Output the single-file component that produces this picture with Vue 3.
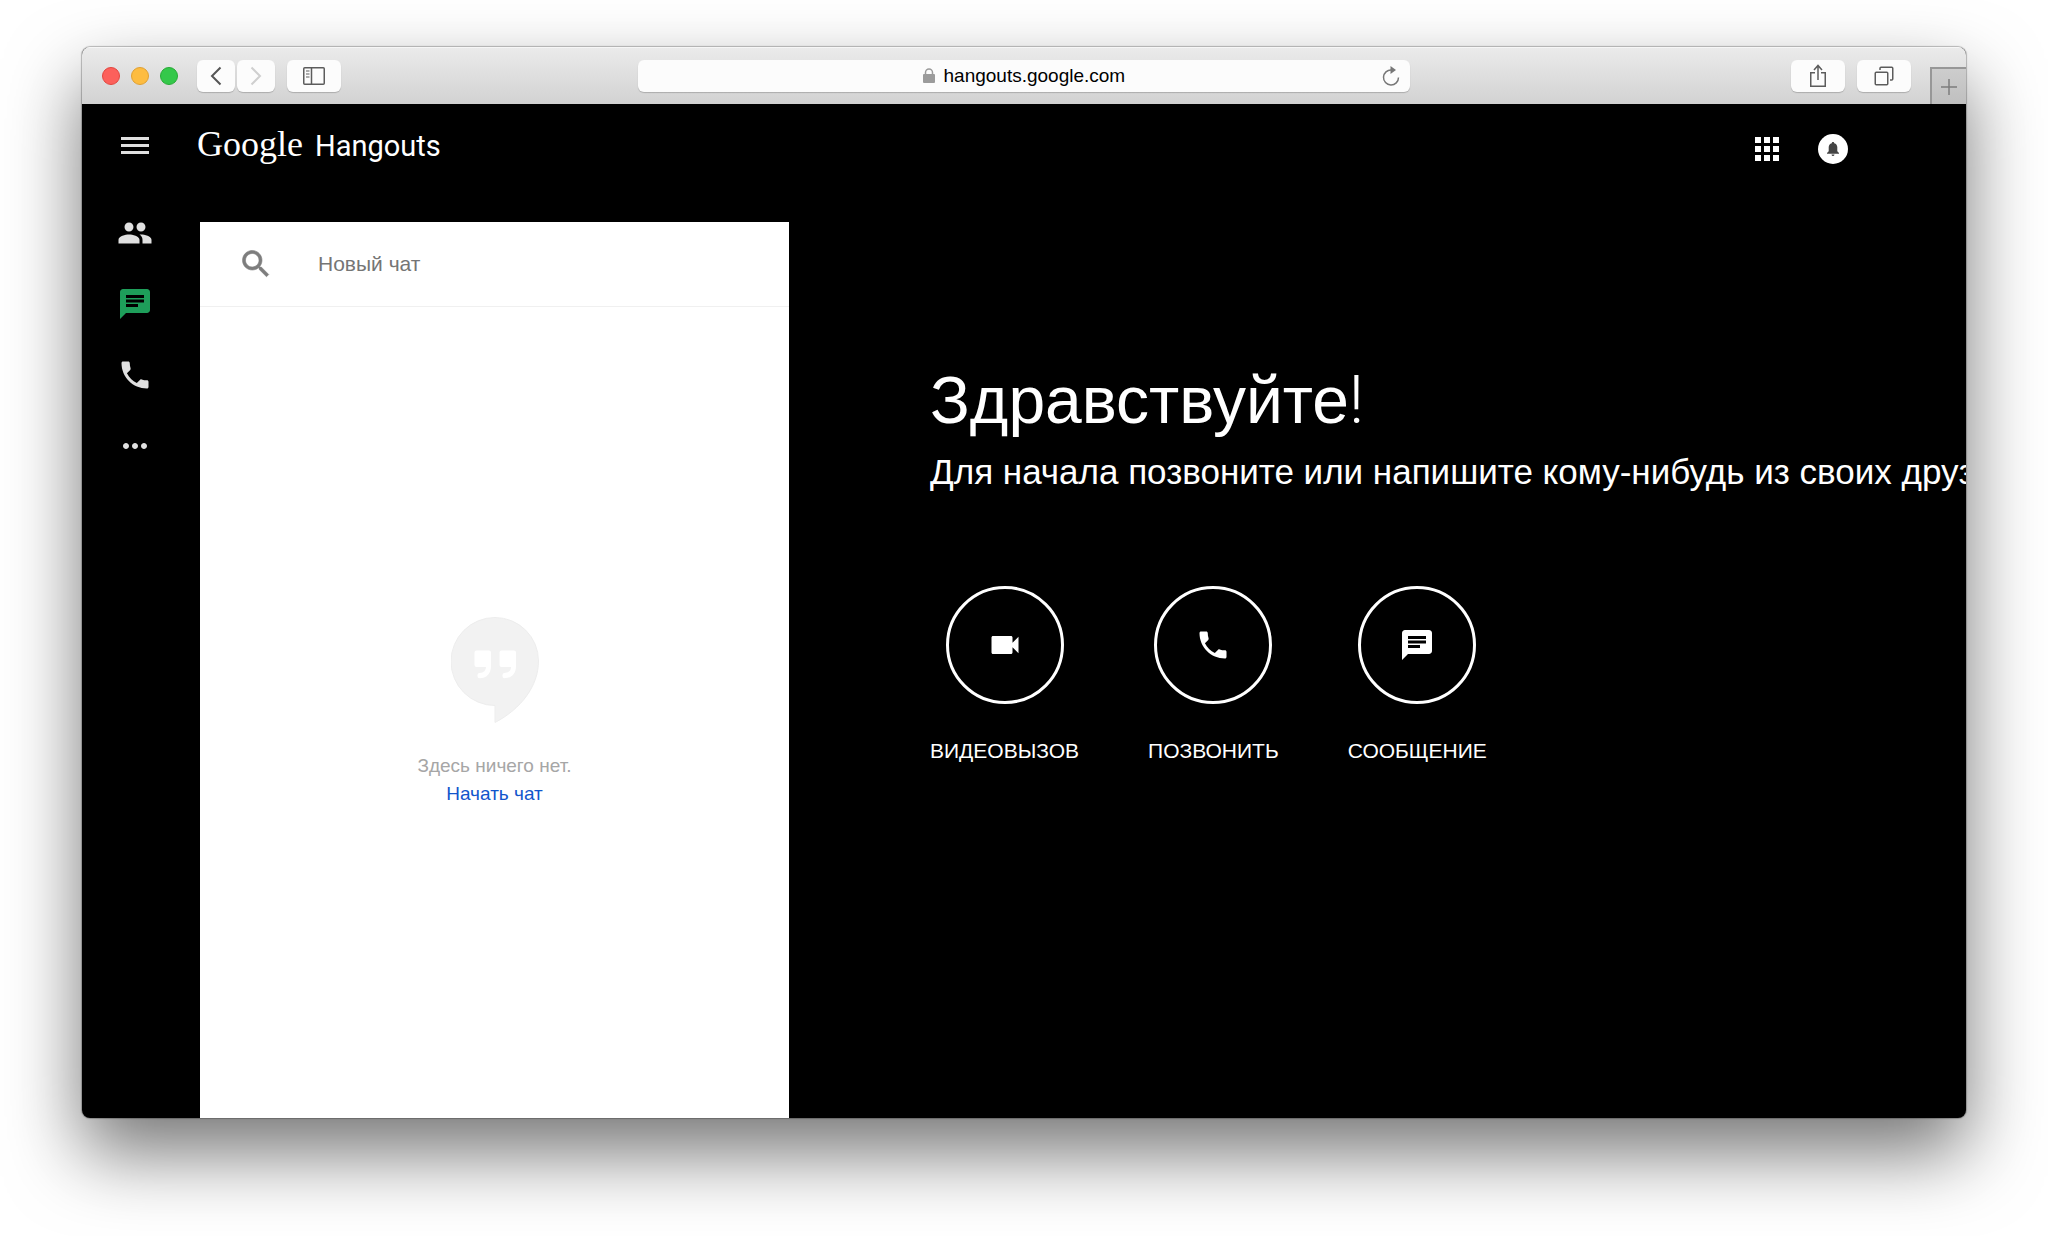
<script setup>
import { ref } from 'vue'

const address = ref('hangouts.google.com')
const query = ref('')
const current = ref('chats')

const icons = {
  people: 'M16 11c1.66 0 2.99-1.34 2.99-3S17.66 5 16 5s-3 1.34-3 3 1.34 3 3 3zm-8 0c1.66 0 2.99-1.34 2.99-3S9.66 5 8 5 5 6.34 5 8s1.34 3 3 3zm0 2c-2.33 0-7 1.17-7 3.5V19h14v-2.500c0-2.330-4.670-3.500-7-3.500zm8 0c-.29 0-.62.02-.97.05 1.160.84 1.970 1.970 1.970 3.450V19h6v-2.500c0-2.330-4.670-3.500-7-3.500z',
  chat: 'M20 2H4c-1.100 0-1.990.9-1.990 2L2 22l4-4h14c1.100 0 2-.9 2-2V4c0-1.100-.9-2-2-2zM6 9h12v2H6V9zm8 5H6v-2h8v2zm4-6H6V6h12v2z',
  phone: 'M6.620 10.790c1.440 2.830 3.760 5.140 6.590 6.590l2.200-2.200c.27-.27.67-.36 1.020-.24 1.120.37 2.330.57 3.570.57.55 0 1 .45 1 1V20c0 .55-.45 1-1 1-9.390 0-17-7.610-17-17 0-.55.45-1 1-1h3.500c.55 0 1 .45 1 1 0 1.250.2 2.450.57 3.570.11.35.03.74-.25 1.020l-2.200 2.200z',
  more: 'M6 10c-1.100 0-2 .9-2 2s.9 2 2 2 2-.9 2-2-.9-2-2-2zm12 0c-1.100 0-2 .9-2 2s.9 2 2 2 2-.9 2-2-.9-2-2-2zm-6 0c-1.100 0-2 .9-2 2s.9 2 2 2 2-.9 2-2-.9-2-2-2z',
  video: 'M17 10.500V7c0-.55-.45-1-1-1H4c-.55 0-1 .45-1 1v10c0 .55.45 1 1 1h12c.55 0 1-.45 1-1v-3.500l4 4v-11l-4 4z',
}

const sections = [
  { id: 'contacts', title: 'Контакты', icon: icons.people },
  { id: 'chats', title: 'Чаты', icon: icons.chat },
  { id: 'calls', title: 'Звонки', icon: icons.phone },
  { id: 'more', title: 'Ещё', icon: icons.more },
]

const actions = [
  { label: 'ВИДЕОВЫЗОВ', icon: icons.video },
  { label: 'ПОЗВОНИТЬ', icon: icons.phone },
  { label: 'СООБЩЕНИЕ', icon: icons.chat },
]
</script>

<template>
  <div class="desktop">
    <div class="window">
      <div class="toolbar">
        <div class="tools">
          <div class="lights">
            <button class="light close" aria-label="Закрыть"></button>
            <button class="light minimize" aria-label="Свернуть"></button>
            <button class="light expand" aria-label="Развернуть"></button>
          </div>
          <div class="history">
            <button class="tool" aria-label="Назад">
              <svg width="12" height="20" viewBox="0 0 12 20"><path d="M10.500 1.500 2 10l8.500 8.500" fill="none" stroke="#555" stroke-width="2" /></svg>
            </button>
            <button class="tool" aria-label="Вперёд" disabled>
              <svg width="12" height="20" viewBox="0 0 12 20"><path d="M1.500 1.500 10 10l-8.500 8.500" fill="none" stroke="#cfcfcf" stroke-width="2" /></svg>
            </button>
          </div>
          <button class="tool wide" aria-label="Боковое меню">
            <svg width="22" height="18" viewBox="0 0 22 18" fill="none" stroke="#5c5c5c">
              <rect x=".75" y=".75" width="20.500" height="16.500" rx="1" stroke-width="1.500" />
              <path d="M8.500 1v16" stroke-width="1.500" />
              <path d="M3 4h3.500M3 7h3.500M3 10h3.500" stroke-width="1" />
            </svg>
          </button>
        </div>

        <label class="address">
          <svg width="12" height="15" viewBox="0 0 12 15"><rect y="6" width="12" height="9" rx="1" fill="#9b9b9b" /><path d="M2.500 7V4.500a3.500 3.500 0 0 1 7 0V7" fill="none" stroke="#9b9b9b" stroke-width="1.500" /></svg>
          <input v-model="address" class="url" type="text" aria-label="Адрес" />
          <button class="reload" aria-label="Обновить">
            <svg width="18" height="20" viewBox="0 0 18 20"><path d="M9.500 4A7.500 7.500 0 1 0 16.500 11.500" fill="none" stroke="#777" stroke-width="1.500" /><path d="M8.500 0v8L14 4z" fill="#777" /></svg>
          </button>
        </label>

        <div class="tools end">
          <button class="tool wide" aria-label="Поделиться">
            <svg width="18" height="24" viewBox="0 0 18 24" fill="none" stroke="#5c5c5c" stroke-width="1.500"><path d="M6 8.750H1.750v13.500h14.500V8.750H12M9 16V2M5 6l4-4.500L13 6" /></svg>
          </button>
          <button class="tool wide" aria-label="Показать все вкладки">
            <svg width="20" height="20" viewBox="0 0 20 20" fill="none" stroke="#5c5c5c" stroke-width="1.500"><rect x="1.250" y="6.250" width="12.500" height="12.500" rx="1" /><path d="M6 4V2.250q0-1 1-1h10.750q1 0 1 1V13q0 1-1 1H16" /></svg>
          </button>
          <button class="new-tab" aria-label="Новая вкладка">
            <svg width="18" height="18" viewBox="0 0 18 18"><path d="M9 1v16M1 9h16" stroke="#7c7c7c" stroke-width="1.500" /></svg>
          </button>
        </div>
      </div>

      <div class="page">
        <header class="header">
          <button class="rail menu" aria-label="Меню">
            <svg width="28" height="20" viewBox="0 0 28 20"><path d="M0 1h28v3H0zM0 8h28v3H0zM0 15h28v3H0z" /></svg>
          </button>
          <a class="brand" href="#">
            <span class="google">Google</span>
            <span class="product">Hangouts</span>
          </a>
          <div class="account">
            <button aria-label="Приложения">
              <svg width="24" height="24" viewBox="0 0 24 24" fill="#fff"><path d="M0 0h6v6H0zM9 0h6v6H9zM18 0h6v6h-6zM0 9h6v6H0zM9 9h6v6H9zM18 9h6v6h-6zM0 18h6v6H0zM9 18h6v6H9zM18 18h6v6h-6z" /></svg>
            </button>
            <button class="bell" aria-label="Уведомления">
              <svg width="12" height="14" viewBox="0 0 12 14"><path d="M6 0c.8 0 1.200.5 1.200 1.200C9.300 1.800 10.300 3.300 10.300 5.300v4L12 11v.8H0V11l1.700-1.700v-4c0-2 1-3.500 3.100-4.100C4.800.5 5.200 0 6 0zM4.500 12.500h3Q7.300 14 6 14t-1.500-1.500z" fill="#444" /></svg>
            </button>
          </div>
        </header>

        <div class="body">
          <nav class="sections">
            <button
              v-for="section in sections"
              :key="section.id"
              class="rail"
              :class="{ active: section.id === current }"
              :aria-label="section.title"
              @click="current = section.id"
            >
              <svg width="36" height="36" viewBox="0 0 24 24"><path :d="section.icon" /></svg>
            </button>
          </nav>

          <section class="panel">
            <label class="search">
              <svg width="36" height="36" viewBox="0 0 24 24"><path d="M15.500 14h-.79l-.28-.27C15.410 12.590 16 11.110 16 9.500 16 5.910 13.090 3 9.500 3S3 5.910 3 9.500 5.910 16 9.500 16c1.610 0 3.090-.59 4.230-1.570l.27.28v.79l5 4.990L20.490 19l-4.990-5zm-6 0C7.010 14 5 11.990 5 9.500S7.010 5 9.500 5 14 7.010 14 9.500 11.990 14 9.500 14z" fill="#7d7d7d" stroke="#7d7d7d" stroke-width=".4" /></svg>
              <input v-model="query" type="text" placeholder="Новый чат" aria-label="Новый чат" />
            </label>
            <div class="empty">
              <svg width="88" height="106" viewBox="0 0 88 106">
                <path d="M44 .5A43.500 43.500 0 0 0 44 88.500V105.500C70 92 87.500 69 87.500 44A43.500 43.500 0 0 0 44 .5z" fill="#f2f2f2" stroke="#ededed" />
                <g fill="#fff">
                  <path d="M25.500 33.500h12.500q2 0 2 2V49c0 8-4.500 12-11.500 12.300q-2 0-2-2V58q0-1.800 2-2 6.500-.5 6.500-6H25.500q-2 0-2-2V35.500q0-2 2-2z" />
                  <path d="M50.500 33.500h12.500q2 0 2 2V49c0 8-4.500 12-11.500 12.300q-2 0-2-2V58q0-1.800 2-2 6.500-.5 6.500-6H50.500q-2 0-2-2V35.500q0-2 2-2z" />
                </g>
              </svg>
              <p>Здесь ничего нет.</p>
              <a href="#">Начать чат</a>
            </div>
          </section>

          <main class="welcome">
            <h1>Здравствуйте<span>!</span></h1>
            <p class="lead">Для начала позвоните или напишите кому-нибудь из своих друзей.</p>
            <div class="actions">
              <button v-for="action in actions" :key="action.label" class="action">
                <span class="ring">
                  <svg width="36" height="36" viewBox="0 0 24 24"><path :d="action.icon" /></svg>
                </span>
                <span>{{ action.label }}</span>
              </button>
            </div>
          </main>
        </div>
      </div>
    </div>
  </div>
</template>

<style>
body {
  margin: 0;
  background: #fff;
}
</style>

<style scoped>
.desktop {
  box-sizing: border-box;
  min-height: 100vh;
  padding: 47px 82px 118px;
  display: flex;
  overflow: hidden;
  font-family: "Liberation Sans", Arial, sans-serif;
}

button {
  margin: 0;
  padding: 0;
  border: 0;
  background: none;
  color: inherit;
  font: inherit;
  display: flex;
  align-items: center;
  justify-content: center;
}

input {
  padding: 0;
  border: 0;
  outline: 0;
  background: none;
  font: inherit;
}

svg {
  display: block;
  flex: none;
}

.window {
  flex: 1;
  min-width: 0;
  display: flex;
  flex-direction: column;
  overflow: hidden;
  border-radius: 8px;
  background: #000;
  box-shadow: 0 0 1px 1px rgba(0, 0, 0, 0.25), 0 35px 74px rgba(0, 0, 0, 0.54);
}

.toolbar {
  box-sizing: border-box;
  height: 57px;
  display: grid;
  grid-template-columns: 1fr 41% 1fr;
  align-items: center;
  background: linear-gradient(#ebebeb, #d2d2d2);
  box-shadow: inset 0 1px #f6f6f6;
}

.tools {
  height: 100%;
  display: flex;
  align-items: center;
  gap: 12px;
  padding-left: 20px;
}

.tools.end {
  justify-content: flex-end;
}

.lights {
  display: flex;
  gap: 11px;
  margin-right: 7px;
}

.light {
  box-sizing: border-box;
  width: 18px;
  height: 18px;
  border: 1px solid #e2463f;
  border-radius: 50%;
  background: #fc605b;
}

.minimize {
  border-color: #dfa033;
  background: #fdbc40;
}

.expand {
  border-color: #27aa35;
  background: #34c84a;
}

.history {
  display: flex;
  gap: 2px;
}

.tool {
  width: 38px;
  height: 32px;
  border-radius: 6px;
  background: #fcfcfc;
  box-shadow: 0 1px 1px rgba(0, 0, 0, 0.2);
}

.tool.wide {
  width: 54px;
}

.address {
  position: relative;
  height: 32px;
  display: flex;
  align-items: center;
  justify-content: center;
  gap: 9px;
  border-radius: 6px;
  background: #fcfcfc;
  box-shadow: 0 1px 1px rgba(0, 0, 0, 0.2);
}

.url {
  width: 182px;
  color: #000;
  font-size: 19px;
}

.reload {
  position: absolute;
  right: 10px;
}

.new-tab {
  box-sizing: border-box;
  align-self: flex-end;
  width: 36px;
  height: 37px;
  margin-left: 7px;
  border: solid #979797;
  border-width: 2px 0 0 2px;
  background: linear-gradient(#cdcdcd, #bfbfbf);
}

.page {
  flex: 1;
  display: flex;
  flex-direction: column;
  color: #fff;
}

.header {
  height: 84px;
  display: flex;
  align-items: center;
}

.rail {
  width: 106px;
  height: 71px;
  fill: #e0e0e0;
}

.rail.active {
  fill: #1e9e5a;
}

.brand {
  display: flex;
  align-items: baseline;
  gap: 12px;
  margin-left: 9px;
  padding-bottom: 4px;
  color: #fff;
  text-decoration: none;
}

.google {
  font: 36px "Liberation Serif", serif;
}

.product {
  font: 29px Roboto, sans-serif;
}

.account {
  display: flex;
  align-items: center;
  gap: 39px;
  margin-left: auto;
  padding: 5px 118px 0 0;
}

.bell {
  width: 30px;
  height: 30px;
  border-radius: 50%;
  background: #fff;
}

.body {
  flex: 1;
  display: flex;
}

.sections {
  flex: none;
  padding-top: 9px;
  margin-right: 12px;
}

.panel {
  flex: none;
  width: 589px;
  margin-top: 34px;
  display: flex;
  flex-direction: column;
  background: #fff;
}

.search {
  height: 84px;
  display: flex;
  align-items: center;
  gap: 44px;
  padding-left: 38px;
  border-bottom: 1px solid #f0f0f0;
}

.search input {
  width: 400px;
  color: #333;
  font-size: 21px;
}

.search input::placeholder {
  color: #757575;
  opacity: 1;
}

.empty {
  flex: 1;
  display: flex;
  flex-direction: column;
  align-items: center;
  justify-content: center;
  font-size: 19px;
  line-height: 28px;
}

.empty p {
  margin: 29px 0 0;
  color: #a6a6a6;
}

.empty a {
  color: #1155cc;
  text-decoration: none;
}

.welcome {
  flex: 1;
  min-width: 0;
  overflow: hidden;
  padding: 174px 0 40px 141px;
}

h1 {
  margin: 0;
  font-size: 66px;
  font-weight: 400;
  line-height: 76px;
}

h1 span {
  font-family: Roboto, sans-serif;
  font-weight: 300;
}

.lead {
  margin: 11px 0 92px;
  font-size: 35px;
  line-height: 44px;
  white-space: nowrap;
}

.actions {
  display: flex;
  gap: 69px;
}

.action {
  flex-direction: column;
  gap: 35px;
  font-size: 21px;
  line-height: 24px;
}

.ring {
  box-sizing: border-box;
  width: 118px;
  height: 118px;
  display: flex;
  align-items: center;
  justify-content: center;
  border: 3px solid #fff;
  border-radius: 50%;
  fill: #fff;
}
</style>
